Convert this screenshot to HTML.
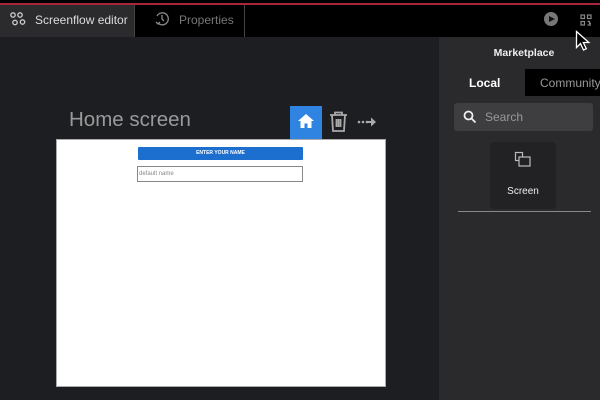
<!DOCTYPE html><html><head><style>
body{margin:0;width:600px;height:400px;overflow:hidden;background:#1d1e21;font-family:"Liberation Sans",sans-serif;position:relative}
div{position:absolute;box-sizing:border-box}
</style></head><body>
<div style="left:0;top:0;width:600px;height:37px;background:#000"></div>
<div style="left:0;top:3px;width:600px;height:2px;background:#a8253a"></div>
<div style="left:0;top:5px;width:135px;height:32px;background:#2b2b2d;border-right:1px solid #444"></div>
<div style="left:244px;top:5px;width:1px;height:32px;background:#444"></div>
<svg style="position:absolute;left:10px;top:12px" width="16" height="14" viewBox="0 0 16 14" fill="none" stroke="#ccc" stroke-width="1.3"><circle cx="3" cy="3" r="2.2"/><circle cx="10" cy="3" r="2.2"/><circle cx="5" cy="10.5" r="2.2"/><circle cx="12.5" cy="10" r="2.2"/></svg>
<div style="left:35px;top:13px;color:#ddd;font-size:12px">Screenflow editor</div>
<svg style="position:absolute;left:155px;top:11px" width="15" height="16" viewBox="0 0 15 16" fill="none" stroke="#888" stroke-width="1.3"><path d="M3 12A6 6 0 1 0 2 5"/><path d="M7 4v4l2 2"/><path d="M1 11l2 2 2-2"/></svg>
<div style="left:179px;top:13px;color:#777;font-size:12px">Properties</div>
<div style="left:544px;top:12px;width:14px;height:14px;border-radius:50%;background:#777"></div>
<div style="left:549px;top:15.5px;width:0;height:0;border-left:6px solid #111;border-top:3.5px solid transparent;border-bottom:3.5px solid transparent"></div>
<svg style="position:absolute;left:580px;top:14px" width="12" height="12" viewBox="0 0 12 12" fill="none" stroke="#888" stroke-width="1.2"><rect x="1" y="1" width="3.5" height="3.5"/><rect x="7.5" y="1" width="3.5" height="3.5"/><rect x="1" y="7.5" width="3.5" height="3.5"/><path d="M7.5 7.5h2v2h1.5M7.5 11h3.5"/></svg>
<div style="left:439px;top:37px;width:161px;height:363px;background:#2a2a2c"></div>
<svg style="position:absolute;left:575px;top:30px" width="16" height="22" viewBox="0 0 16 22"><path d="M1.5 1.5v16l4-4 3 6.5 2.8-1.3-3-6.2h5.5z" fill="#000" stroke="#fff" stroke-width="1.3"/></svg>
<div style="left:439px;top:47px;width:170px;text-align:center;color:#eee;font-size:10.5px;font-weight:bold">Marketplace</div>
<div style="left:525px;top:69px;width:75px;height:27px;background:#000"></div>
<div style="left:469px;top:76px;color:#fff;font-size:12px;font-weight:bold">Local</div>
<div style="left:540px;top:76px;color:#999;font-size:12px">Community</div>
<div style="left:454px;top:103px;width:139px;height:28px;background:#3e3e40;border-radius:3px"></div>
<svg style="position:absolute;left:463px;top:110px" width="14" height="14" viewBox="0 0 14 14" fill="none" stroke="#eee" stroke-width="1.8"><circle cx="5.5" cy="5.5" r="4"/><path d="M8.5 8.5l4 4"/></svg>
<div style="left:485px;top:110px;color:#999;font-size:12px">Search</div>
<div style="left:490px;top:142px;width:66px;height:67px;background:#222225;border-radius:4px"></div>
<svg style="position:absolute;left:514px;top:151px" width="18" height="17" viewBox="0 0 18 17" fill="none" stroke="#bbb" stroke-width="1.2"><rect x="1.5" y="1.5" width="7" height="8"/><rect x="5" y="6" width="11" height="9" fill="#222225"/></svg>
<div style="left:490px;top:186px;width:66px;text-align:center;color:#eee;font-size:10px">Screen</div>
<div style="left:458px;top:211px;width:133px;height:1px;background:#888"></div>
<div style="left:69px;top:108px;color:#999;font-size:20.5px">Home screen</div>
<div style="left:290px;top:106px;width:32px;height:34px;background:#2f84e2"></div>
<svg style="position:absolute;left:297px;top:113px" width="18" height="16" viewBox="0 0 18 16"><path d="M9 1L1 8h2.5v7h4v-4.5h3V15h4V8H17z" fill="#fff"/></svg>
<svg style="position:absolute;left:329px;top:111px" width="19" height="22" viewBox="0 0 19 22" fill="none" stroke="#aaa" stroke-width="1.8"><path d="M1 4h17M6 4V1.5h7V4M3 4l1 16h11l1-16M7.5 8v8M9.5 8v8M11.5 8v8"/></svg>
<svg style="position:absolute;left:357px;top:116px" width="21" height="12" viewBox="0 0 21 12" fill="#aaa"><circle cx="2" cy="6" r="1.3"/><circle cx="6" cy="6" r="1.3"/><circle cx="10" cy="6" r="1.3"/><rect x="11" y="5" width="5" height="2"/><path d="M14 1.5l5 4.5-5 4.5z"/></svg>
<div style="left:56px;top:139px;width:330px;height:248px;background:#fff;border:1px solid #aaa"></div>
<div style="left:138px;top:147px;width:165px;height:13px;background:#1c6ecf;border-radius:1px;color:#fff;font-size:5px;font-weight:bold;text-align:center;line-height:13px">ENTER YOUR NAME</div>
<div style="left:137px;top:166px;width:166px;height:16px;border:1px solid #888;color:#888;font-size:6px;line-height:14px;padding-left:1px">default name</div>
</body></html>
